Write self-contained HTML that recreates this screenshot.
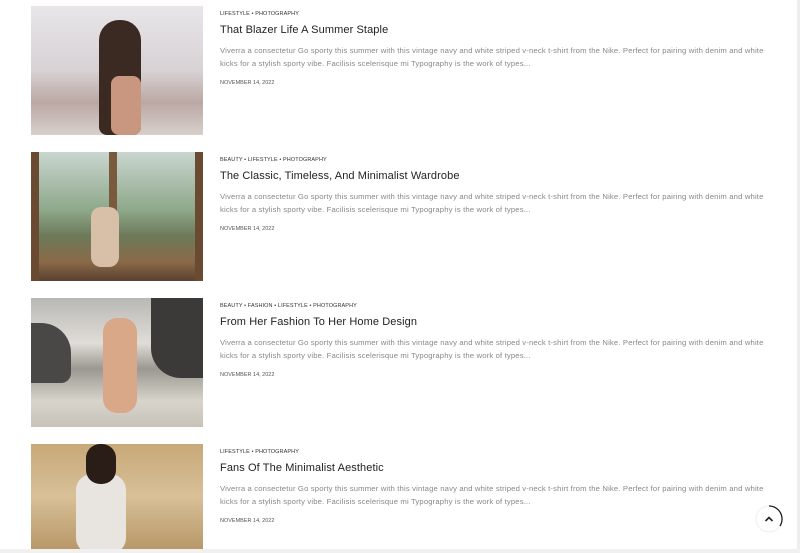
<!DOCTYPE html>
<html style="overflow:hidden;height:553px"><head><meta charset="utf-8"><style>
body{margin:0;width:800px;height:553px;overflow:hidden;background:#fff;font-family:"Liberation Sans",sans-serif;position:relative}
.post{position:absolute;left:31px;width:740px;height:129px}
.img{position:absolute;left:0;top:0;width:172px;height:129px;overflow:hidden}
.t{position:absolute;left:189px;top:0;width:553px}
.cat{font-size:5.5px;color:#333;letter-spacing:.1px;margin-top:5px;text-transform:uppercase}
.h{font-size:11px;color:#222;margin-top:7px;letter-spacing:.1px}
.p{font-size:7.7px;line-height:13px;color:#888;margin-top:8px;letter-spacing:.15px}
.d{font-size:5.5px;color:#555;margin-top:10px}
</style></head><body>
<div style="position:absolute;right:0;top:0;width:3px;height:553px;background:#eee"></div>
<div style="position:absolute;left:0;bottom:0;width:800px;height:4px;background:#f0f0f0"></div>

<div class="post" style="top:6px">
<div class="img" style="background:linear-gradient(180deg,#e8e6ea 0%,#d7d2d4 50%,#bba8a4 75%,#d8d0cc 100%)">
<div style="position:absolute;left:68px;top:14px;width:42px;height:115px;background:#3a2a22;border-radius:20px 20px 8px 8px"></div>
<div style="position:absolute;left:80px;top:70px;width:30px;height:59px;background:#c99680;border-radius:8px"></div></div>
<div class="t"><div class="cat">Lifestyle • Photography</div><div class="h">That Blazer Life A Summer Staple</div>
<div class="p">Viverra a consectetur Go sporty this summer with this vintage navy and white striped v-neck t-shirt from the Nike. Perfect for pairing with denim and white kicks for a stylish sporty vibe. Facilisis scelerisque mi Typography is the work of types...</div><div class="d">NOVEMBER 14, 2022</div></div></div>

<div class="post" style="top:152px">
<div class="img" style="background:linear-gradient(180deg,#c9d6d0 0%,#8ea88a 45%,#6c7a5a 65%,#8a6a48 85%,#5a4030 100%)">
<div style="position:absolute;left:0;top:0;width:8px;height:129px;background:#6a4a30"></div>
<div style="position:absolute;left:78px;top:0;width:8px;height:110px;background:#7a5a3c"></div>
<div style="position:absolute;left:164px;top:0;width:8px;height:129px;background:#6a4a30"></div>
<div style="position:absolute;left:60px;top:55px;width:28px;height:60px;background:#d8c0a8;border-radius:10px"></div></div>
<div class="t"><div class="cat">Beauty • Lifestyle • Photography</div><div class="h">The Classic, Timeless, And Minimalist Wardrobe</div>
<div class="p">Viverra a consectetur Go sporty this summer with this vintage navy and white striped v-neck t-shirt from the Nike. Perfect for pairing with denim and white kicks for a stylish sporty vibe. Facilisis scelerisque mi Typography is the work of types...</div><div class="d">NOVEMBER 14, 2022</div></div></div>

<div class="post" style="top:298px">
<div class="img" style="background:linear-gradient(180deg,#b8b8b4 0%,#e0ddd8 35%,#9a9890 55%,#d8d4cc 80%,#c8c2b8 100%)">
<div style="position:absolute;left:120px;top:0;width:52px;height:80px;background:#3c3a38;border-radius:0 0 0 30px"></div>
<div style="position:absolute;left:0;top:25px;width:40px;height:60px;background:#4a4846;border-radius:0 30px 10px 0"></div>
<div style="position:absolute;left:72px;top:20px;width:34px;height:95px;background:#d8a888;border-radius:14px"></div></div>
<div class="t"><div class="cat">Beauty • Fashion • Lifestyle • Photography</div><div class="h">From Her Fashion To Her Home Design</div>
<div class="p">Viverra a consectetur Go sporty this summer with this vintage navy and white striped v-neck t-shirt from the Nike. Perfect for pairing with denim and white kicks for a stylish sporty vibe. Facilisis scelerisque mi Typography is the work of types...</div><div class="d">NOVEMBER 14, 2022</div></div></div>

<div class="post" style="top:444px;height:105px">
<div class="img" style="height:105px;background:linear-gradient(180deg,#c8a878 0%,#d8c098 50%,#b89868 100%)">
<div style="position:absolute;left:45px;top:30px;width:50px;height:80px;background:#e8e4e0;border-radius:16px"></div>
<div style="position:absolute;left:55px;top:0;width:30px;height:40px;background:#2a1c16;border-radius:14px"></div></div>
<div class="t"><div class="cat">Lifestyle • Photography</div><div class="h">Fans Of The Minimalist Aesthetic</div>
<div class="p">Viverra a consectetur Go sporty this summer with this vintage navy and white striped v-neck t-shirt from the Nike. Perfect for pairing with denim and white kicks for a stylish sporty vibe. Facilisis scelerisque mi Typography is the work of types...</div><div class="d">NOVEMBER 14, 2022</div></div></div>

<svg style="position:absolute;left:754px;top:504px" width="30" height="30" viewBox="0 0 30 30">
<circle cx="15" cy="15" r="13" fill="#fff" stroke="#eee" stroke-width="1"/>
<path d="M15 2 A13 13 0 0 1 26 22" fill="none" stroke="#222" stroke-width="1.3"/>
<path d="M11.5 17 L15 13.5 L18.5 17" fill="none" stroke="#222" stroke-width="1.6"/>
</svg>
</body></html>
